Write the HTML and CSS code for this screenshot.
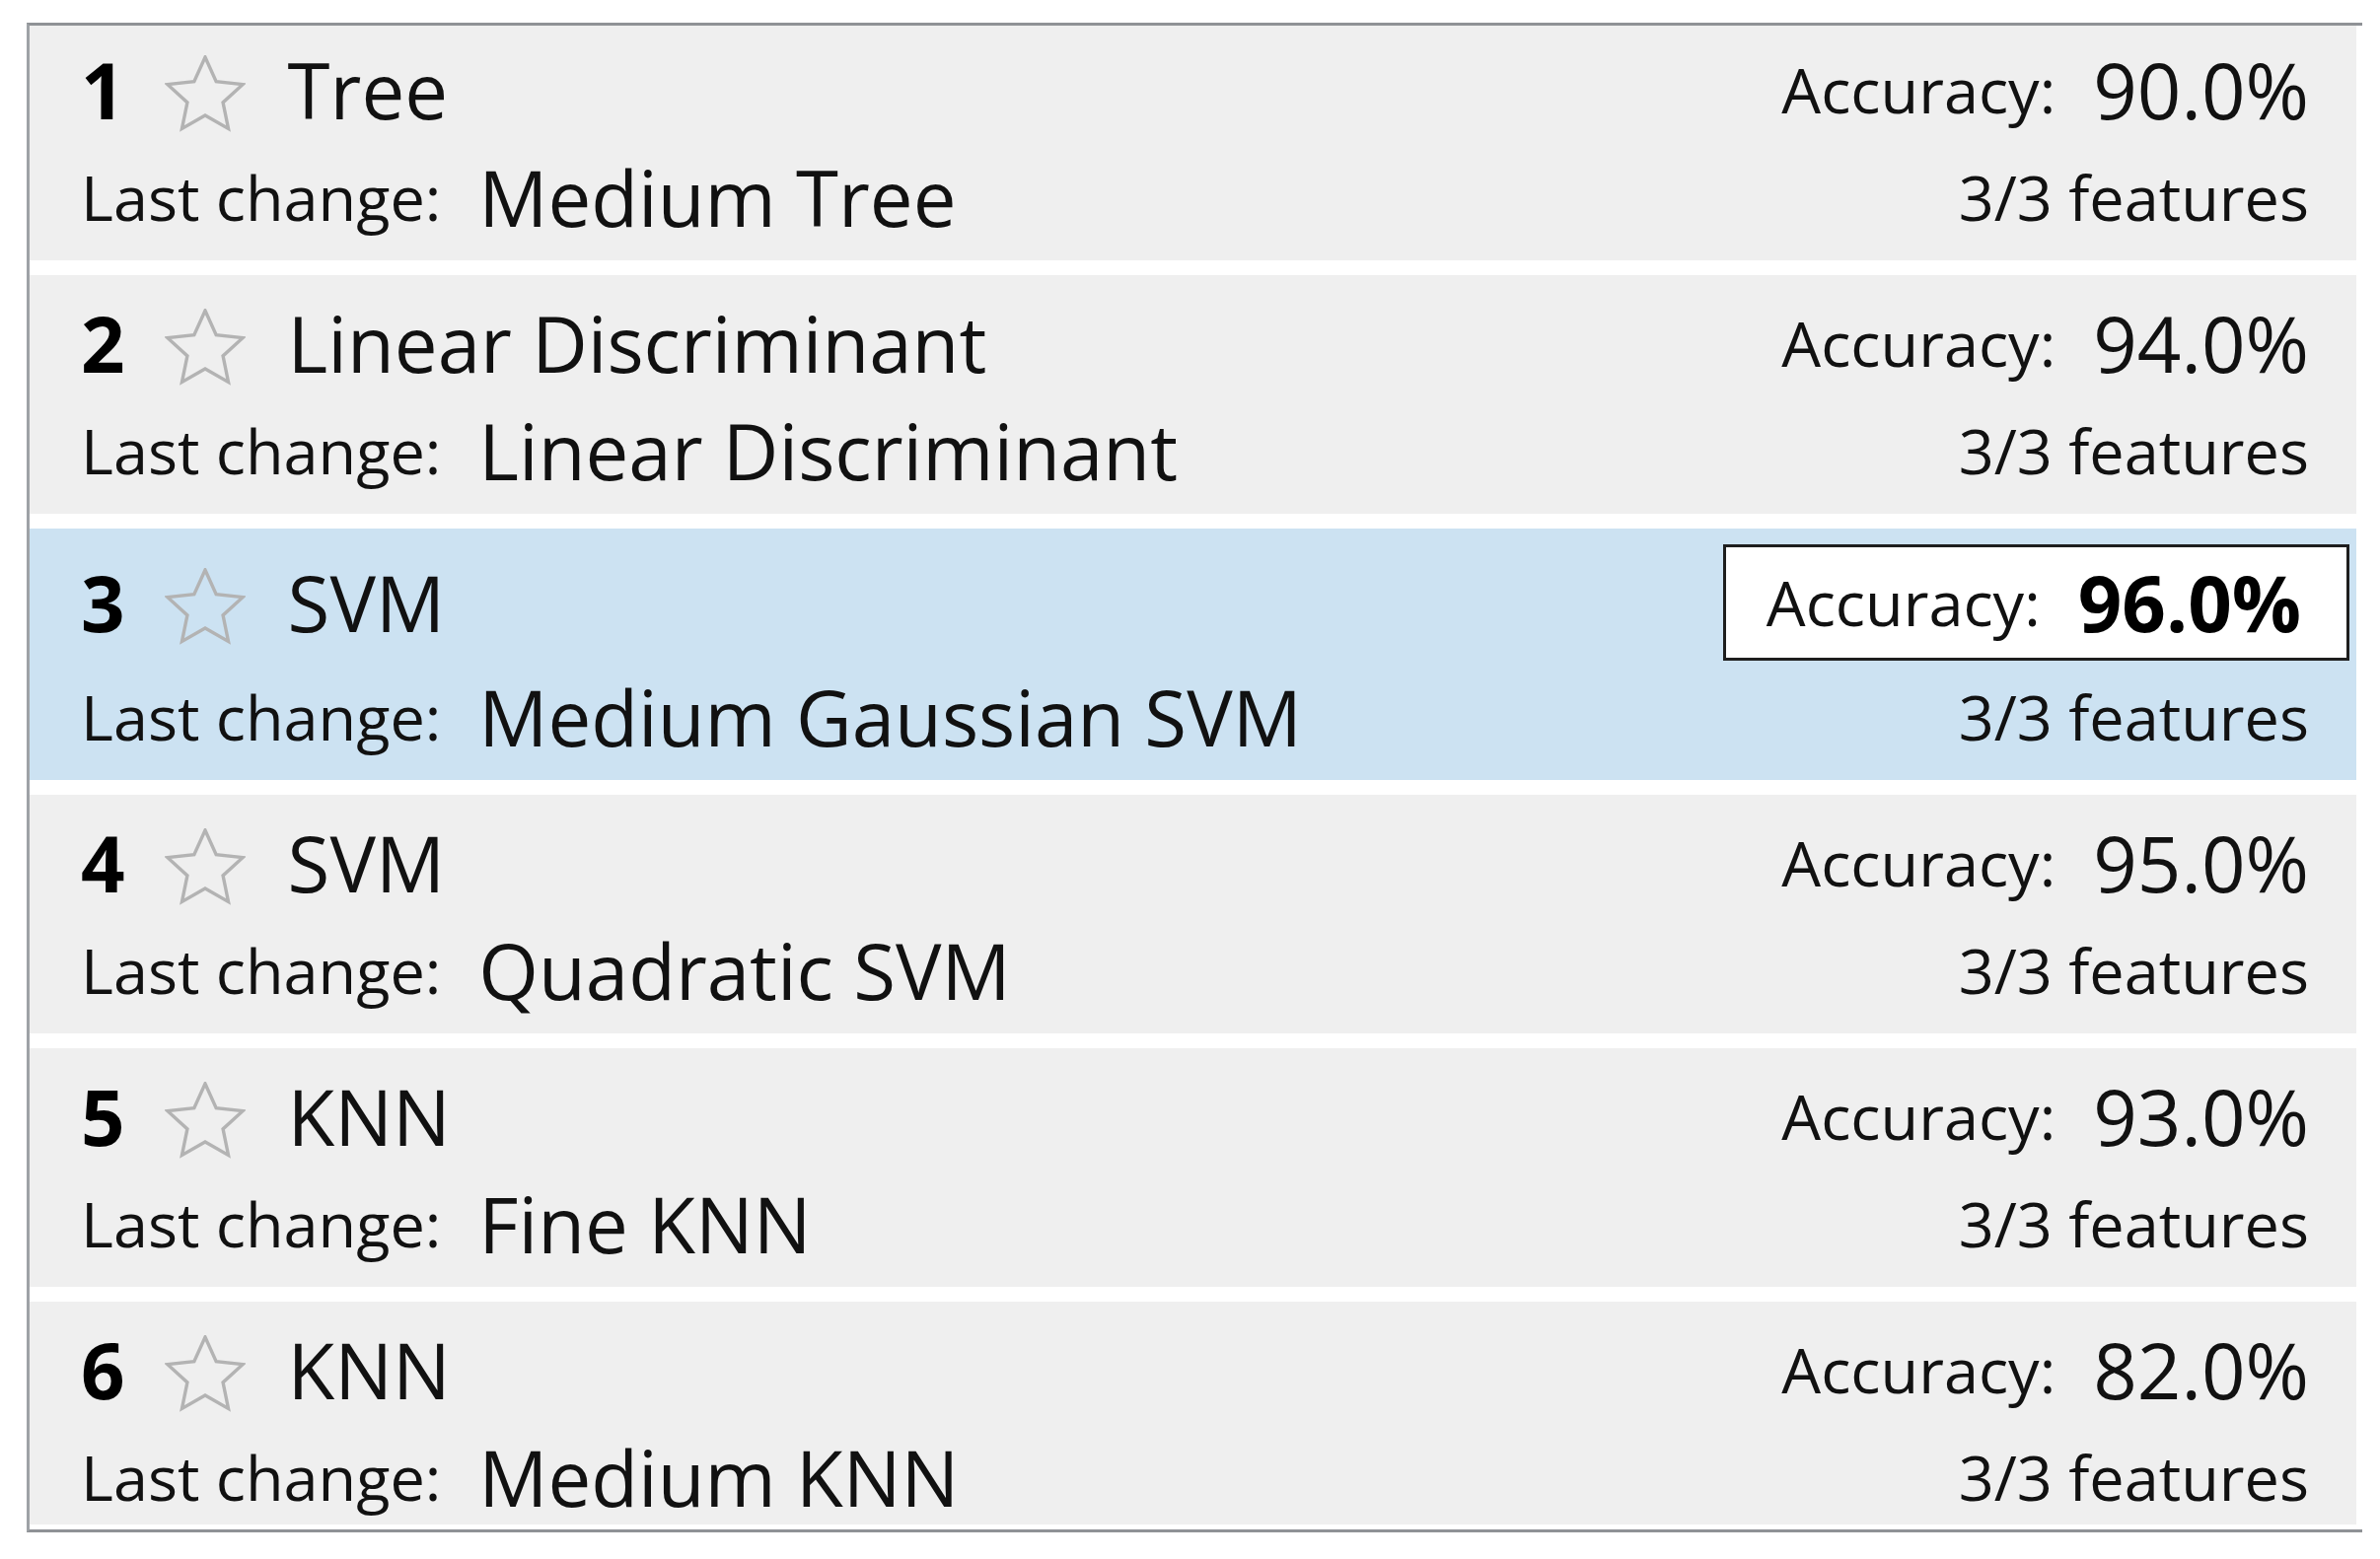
FILE: index.html
```html
<!DOCTYPE html>
<html>
<head>
<meta charset="utf-8">
<title>Models</title>
<link rel="stylesheet" href="styles.css">
</head>
<body>
<div class="frame">
  <div class="list">

    <div class="row first">
      <div class="line">
        <div class="lead"><span class="num">1</span><span class="star"><svg width="82" height="78" viewBox="0 0 82 78"><polygon points="41,2 52.17,26.63 79.04,29.64 59.07,47.87 64.51,74.36 41,61 17.49,74.36 22.93,47.87 2.96,29.64 29.83,26.63"/></svg></span><span class="name">Tree</span></div>
        <div class="acc"><span class="lbl">Accuracy:</span><span class="val">90.0%</span></div>
      </div>
      <div class="line second">
        <div class="lead"><span class="lbl">Last change:</span><span class="val">Medium Tree</span></div>
        <div class="feat">3/3 features</div>
      </div>
    </div>

    <div class="row">
      <div class="line">
        <div class="lead"><span class="num">2</span><span class="star"><svg width="82" height="78" viewBox="0 0 82 78"><polygon points="41,2 52.17,26.63 79.04,29.64 59.07,47.87 64.51,74.36 41,61 17.49,74.36 22.93,47.87 2.96,29.64 29.83,26.63"/></svg></span><span class="name">Linear Discriminant</span></div>
        <div class="acc"><span class="lbl">Accuracy:</span><span class="val">94.0%</span></div>
      </div>
      <div class="line second">
        <div class="lead"><span class="lbl">Last change:</span><span class="val">Linear Discriminant</span></div>
        <div class="feat">3/3 features</div>
      </div>
    </div>

    <div class="row sel">
      <div class="line">
        <div class="lead"><span class="num">3</span><span class="star"><svg width="82" height="78" viewBox="0 0 82 78"><polygon points="41,2 52.17,26.63 79.04,29.64 59.07,47.87 64.51,74.36 41,61 17.49,74.36 22.93,47.87 2.96,29.64 29.83,26.63"/></svg></span><span class="name">SVM</span></div>
        <div class="acc boxed"><span class="lbl">Accuracy:</span><span class="val best">96.0%</span></div>
      </div>
      <div class="line second">
        <div class="lead"><span class="lbl">Last change:</span><span class="val">Medium Gaussian SVM</span></div>
        <div class="feat">3/3 features</div>
      </div>
    </div>

    <div class="row">
      <div class="line">
        <div class="lead"><span class="num">4</span><span class="star"><svg width="82" height="78" viewBox="0 0 82 78"><polygon points="41,2 52.17,26.63 79.04,29.64 59.07,47.87 64.51,74.36 41,61 17.49,74.36 22.93,47.87 2.96,29.64 29.83,26.63"/></svg></span><span class="name">SVM</span></div>
        <div class="acc"><span class="lbl">Accuracy:</span><span class="val">95.0%</span></div>
      </div>
      <div class="line second">
        <div class="lead"><span class="lbl">Last change:</span><span class="val">Quadratic SVM</span></div>
        <div class="feat">3/3 features</div>
      </div>
    </div>

    <div class="row">
      <div class="line">
        <div class="lead"><span class="num">5</span><span class="star"><svg width="82" height="78" viewBox="0 0 82 78"><polygon points="41,2 52.17,26.63 79.04,29.64 59.07,47.87 64.51,74.36 41,61 17.49,74.36 22.93,47.87 2.96,29.64 29.83,26.63"/></svg></span><span class="name">KNN</span></div>
        <div class="acc"><span class="lbl">Accuracy:</span><span class="val">93.0%</span></div>
      </div>
      <div class="line second">
        <div class="lead"><span class="lbl">Last change:</span><span class="val">Fine KNN</span></div>
        <div class="feat">3/3 features</div>
      </div>
    </div>

    <div class="row last">
      <div class="line">
        <div class="lead"><span class="num">6</span><span class="star"><svg width="82" height="78" viewBox="0 0 82 78"><polygon points="41,2 52.17,26.63 79.04,29.64 59.07,47.87 64.51,74.36 41,61 17.49,74.36 22.93,47.87 2.96,29.64 29.83,26.63"/></svg></span><span class="name">KNN</span></div>
        <div class="acc"><span class="lbl">Accuracy:</span><span class="val">82.0%</span></div>
      </div>
      <div class="line second">
        <div class="lead"><span class="lbl">Last change:</span><span class="val">Medium KNN</span></div>
        <div class="feat">3/3 features</div>
      </div>
    </div>

  </div>
</div>
</body>
</html>
```

FILE: styles.css
```css
html, body {
  margin: 0;
  padding: 0;
  background: #ffffff;
}

body {
  font-family: "Open Sans", "Noto Sans", "Liberation Sans", sans-serif;
  color: #111111;
}

.frame {
  margin-top: 23px;
  margin-left: 27px;
  width: 2359px;
  padding: 0 6px 5px 0;
  border-top: 3px solid #8f9296;
  border-left: 3px solid #9ea2a6;
  border-bottom: 3px solid #8f9296;
  background: #ffffff;
}

.list {
  display: flex;
  flex-direction: column;
  gap: 15px;
}

.row {
  flex: none;
  background: #efefef;
  padding: 17px 48px 16px 52px;
}

.row.first {
  padding-top: 13px;
}

.row.last {
  padding-bottom: 0;
}

.row.sel {
  background: #cce2f2;
  padding-top: 16px;
}

.line {
  display: flex;
  justify-content: space-between;
  align-items: center;
}

.line.second {
  margin-top: 9px;
}

.lead,
.acc {
  display: flex;
  align-items: center;
}

.num,
.name,
.val,
.lbl,
.feat {
  line-height: 104px;
}

.line.second .val,
.line.second .lbl,
.line.second .feat {
  line-height: 96px;
}

.num,
.name,
.val {
  font-size: 78px;
}

.lbl,
.feat {
  font-size: 63px;
}

.num {
  font-weight: 700;
  color: #000000;
}

.star {
  display: block;
  margin: 8px 43px 0 40px;
}

.star svg {
  display: block;
}

.star polygon {
  fill: none;
  stroke: #b3b3b3;
  stroke-width: 3.4;
  stroke-linejoin: miter;
}

.val {
  margin-left: 38px;
}

.acc.boxed {
  background: #ffffff;
  border: 3px solid #1e1e1e;
  padding: 4px 46px 4px 41px;
  margin-right: -41px;
}

.val.best {
  font-weight: 700;
  color: #000000;
}
```
